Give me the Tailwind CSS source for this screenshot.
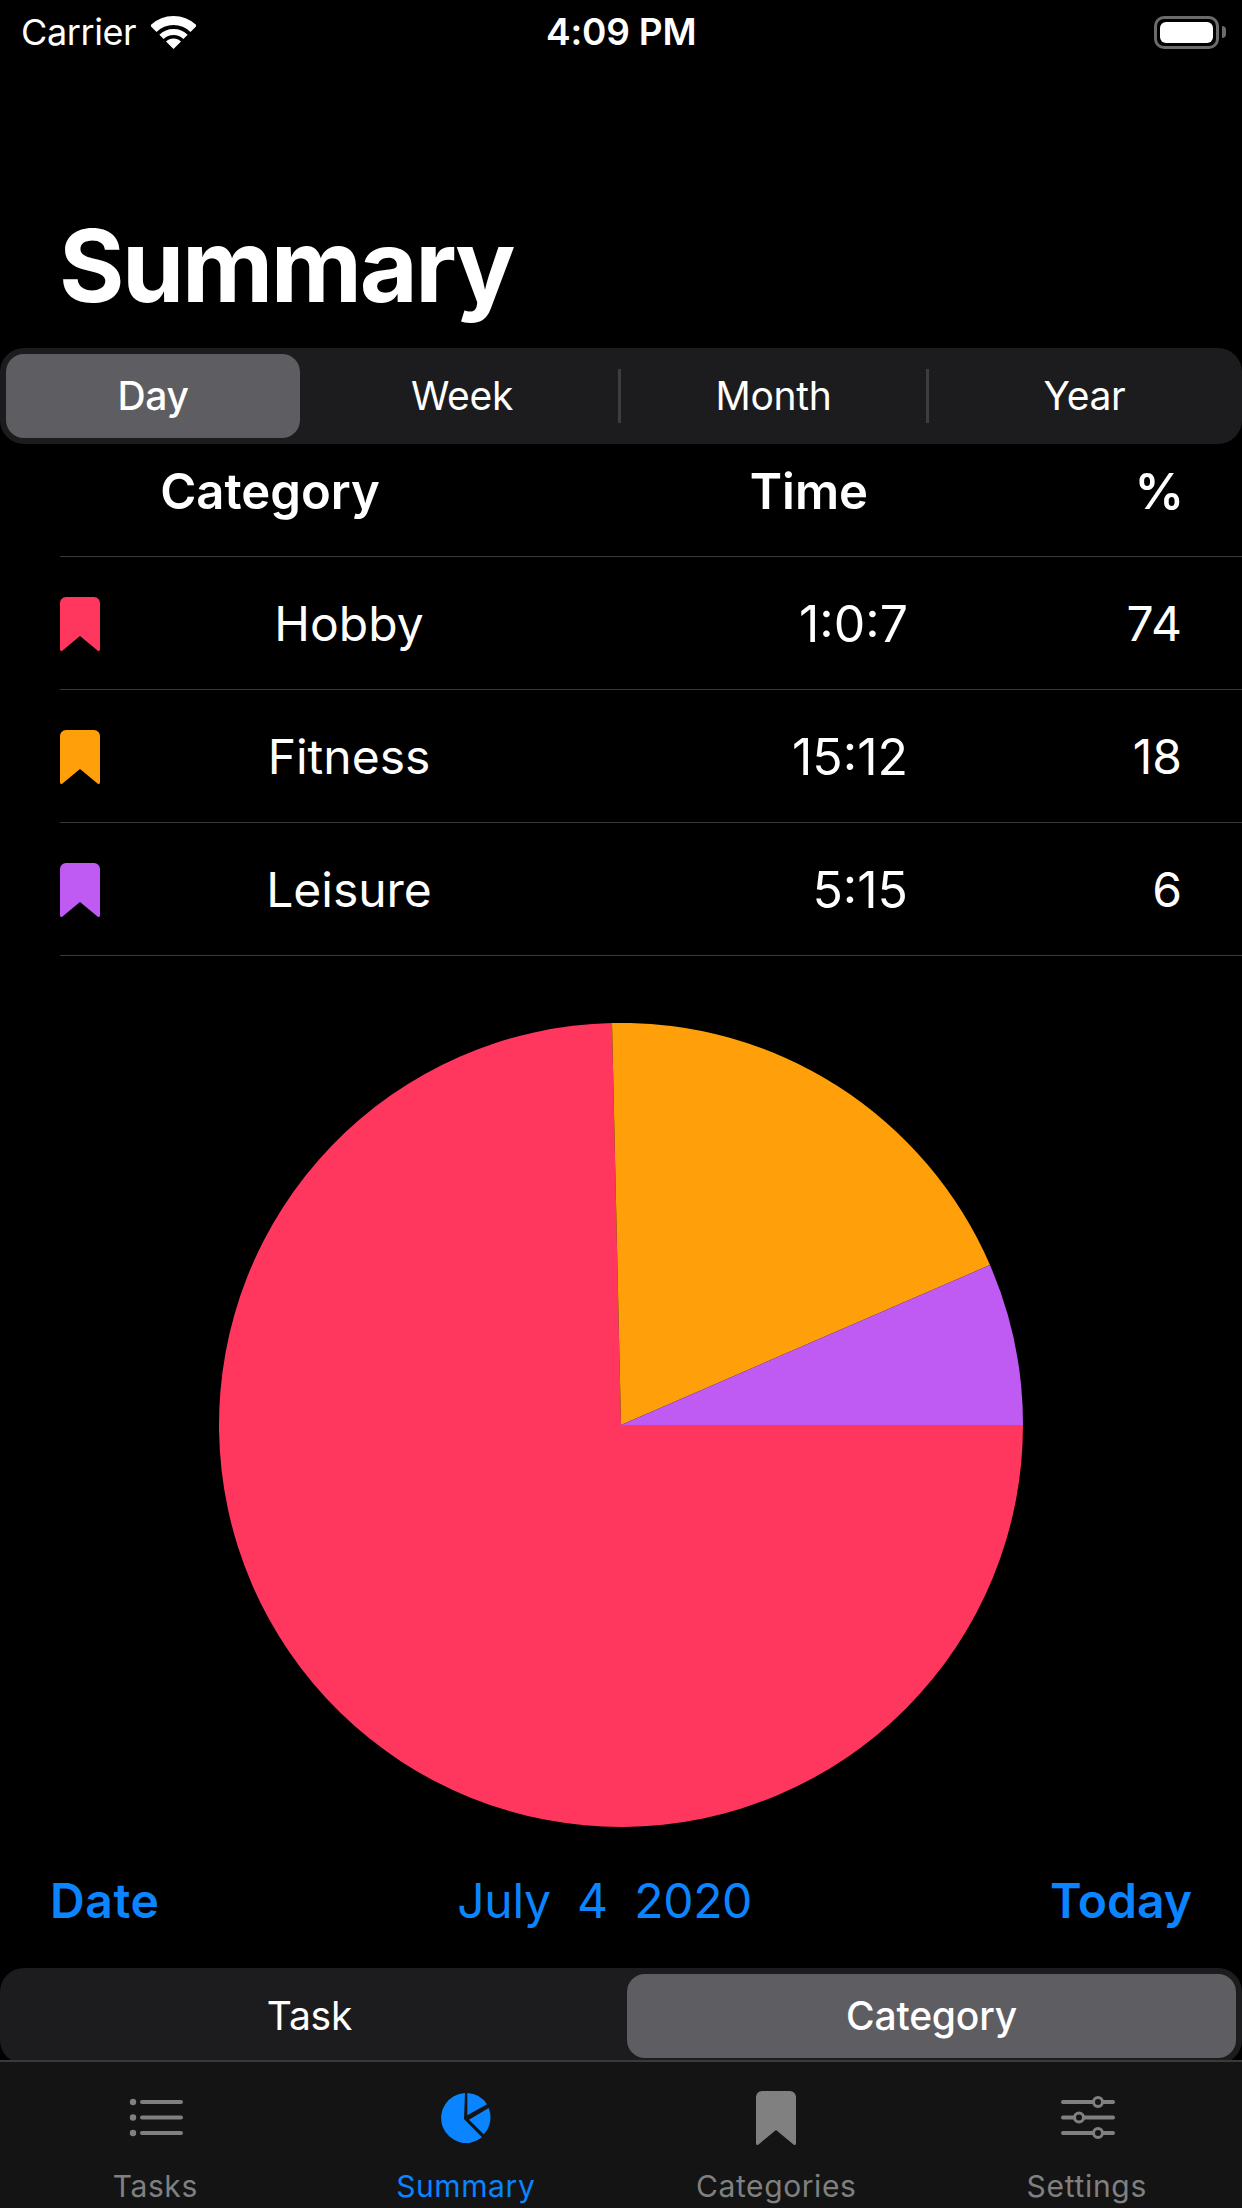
<!DOCTYPE html>
<html lang="en">
  <head>
    <meta charset="UTF-8" />
    <meta name="viewport" content="width=device-width, initial-scale=1.0" />
    <title>Summary</title>
    <script src="https://cdn.jsdelivr.net/npm/@tailwindcss/browser@4"></script>
  </head>
  <body class="bg-black font-['Inter',sans-serif] text-white">
    <div class="w-[1242px] h-[2208px] flex flex-col overflow-hidden bg-black">
      <!-- status bar -->
      <div class="h-[64px] shrink-0 relative flex items-center pl-[21px] pr-[16px]">
        <span class="text-[36px] leading-[64px] tracking-[-0.4px]">Carrier</span>
        <svg class="ml-[15px] w-[45px] h-[33px]" viewBox="0 0 45 33" fill="none" stroke="white">
          <path d="M2.35 12.85A28.5 28.5 0 0 1 42.65 12.85" stroke-width="9" />
          <path d="M10.48 20.98A17 17 0 0 1 34.52 20.98" stroke-width="6" />
          <path d="M22.5 33L15 25.5A10.6 10.6 0 0 1 30 25.5Z" fill="white" stroke="none" />
        </svg>
        <span class="absolute left-[546px] top-0 text-[37px] leading-[64px] font-semibold tracking-[-0.2px]">4:09 PM</span>
        <div class="ml-auto flex items-center">
          <div class="w-[65px] h-[33px] rounded-[10px] border-[3px] border-[#6b6b6b] p-[3px]">
            <div class="w-full h-full rounded-[6px] bg-white"></div>
          </div>
          <div class="w-[4px] h-[12px] ml-[3px] rounded-r-full bg-[#6b6b6b]"></div>
        </div>
      </div>

      <h1 class="h-[284px] shrink-0 pl-[59px] pt-[140px] text-[100px] leading-[124px] font-bold tracking-[-2.4px]">Summary</h1>

      <!-- range picker -->
      <div class="h-[96px] shrink-0 rounded-[24px] bg-[#1c1c1e] p-[6px] flex items-center text-[39px] tracking-[-0.3px]">
        <div class="w-[294px] h-[84px] rounded-[18px] bg-[#5e5e62] flex items-center justify-center font-medium">Day</div>
        <div class="w-[318px] pl-[6px] flex items-center justify-center">Week</div>
        <div class="w-[3px] h-[54px] bg-[#3d3d40]"></div>
        <div class="w-[305px] flex items-center justify-center">Month</div>
        <div class="w-[3px] h-[54px] bg-[#3d3d40]"></div>
        <div class="flex-1 pl-[4px] flex items-center justify-center">Year</div>
      </div>

      <!-- table -->
      <div class="ml-[60px] shrink-0">
        <div class="h-[113px] border-b-[1.5px] border-[#3a3a3c] grid grid-cols-[40px_340px_428px_1fr] pr-[58px] items-center text-[49px] font-semibold pb-[17px]">
          <span></span>
          <span class="text-center">Category</span>
          <span class="text-right">Time</span>
          <span class="text-right">%</span>
        </div>
        <div class="h-[133px] pt-[2px] border-b-[1.5px] border-[#3a3a3c] grid grid-cols-[40px_498px_310px_1fr] pr-[60px] items-center text-[48px]">
          <svg class="w-[40px] h-[54px]" viewBox="0 0 40 54" fill="#ff375f"><path d="M0 6a6 6 0 0 1 6-6h28a6 6 0 0 1 6 6v46q0 3-2.5 1.5L20 39 2.5 53.5Q0 55 0 52Z" /></svg>
          <span class="text-center">Hobby</span>
          <span class="text-right text-[50px]">1:0:7</span>
          <span class="text-right">74</span>
        </div>
        <div class="h-[133px] pt-[2px] border-b-[1.5px] border-[#3a3a3c] grid grid-cols-[40px_498px_310px_1fr] pr-[60px] items-center text-[48px]">
          <svg class="w-[40px] h-[54px]" viewBox="0 0 40 54" fill="#ff9f0a"><path d="M0 6a6 6 0 0 1 6-6h28a6 6 0 0 1 6 6v46q0 3-2.5 1.5L20 39 2.5 53.5Q0 55 0 52Z" /></svg>
          <span class="text-center">Fitness</span>
          <span class="text-right text-[50px]">15:12</span>
          <span class="text-right">18</span>
        </div>
        <div class="h-[133px] pt-[2px] border-b-[1.5px] border-[#3a3a3c] grid grid-cols-[40px_498px_310px_1fr] pr-[60px] items-center text-[48px]">
          <svg class="w-[40px] h-[54px]" viewBox="0 0 40 54" fill="#bf5af2"><path d="M0 6a6 6 0 0 1 6-6h28a6 6 0 0 1 6 6v46q0 3-2.5 1.5L20 39 2.5 53.5Q0 55 0 52Z" /></svg>
          <span class="text-center">Leisure</span>
          <span class="text-right text-[50px]">5:15</span>
          <span class="text-right">6</span>
        </div>
      </div>

      <!-- pie -->
      <div class="shrink-0 pt-[67px] flex justify-center">
        <svg class="w-[804px] h-[804px]" viewBox="0 0 804 804">
          <path d="M402 402L804 402A402 402 0 1 1 393 0Z" fill="#ff375f" />
          <path d="M402 402L393 0A402 402 0 0 1 771 242Z" fill="#ff9f0a" />
          <path d="M402 402L771 242A402 402 0 0 1 804 402Z" fill="#bf5af2" />
        </svg>
      </div>

      <!-- date row -->
      <div class="h-[141px] shrink-0 flex items-center justify-between px-[50px] pt-[6px] text-[48px] text-[#0a84ff]">
        <span class="font-semibold tracking-[0.6px]">Date</span>
        <span class="whitespace-pre tracking-[-0.3px]">July  4  2020</span>
        <span class="font-semibold">Today</span>
      </div>

      <!-- group picker -->
      <div class="h-[96px] -mb-[4px] shrink-0 rounded-[24px] bg-[#1c1c1e] p-[6px] flex items-start text-[39px] tracking-[-0.2px]">
        <div class="w-[621px] h-[84px] pr-[14px] flex items-center justify-center">Task</div>
        <div class="flex-1 h-[84px] rounded-[18px] bg-[#5e5e62] flex items-center justify-center font-medium">Category</div>
      </div>

      <!-- tab bar -->
      <div class="relative flex-1 border-t-[2px] border-[#3a3a3c] bg-[#141414] grid grid-cols-4 text-[30px] text-[#808080]">
        <div class="flex flex-col items-center">
          <svg class="mt-[29px] w-[60px] h-[54px]" viewBox="0 0 60 54" fill="#808080" stroke="none">
            <circle cx="8" cy="11" r="3.2" /><circle cx="8" cy="26.5" r="3.2" /><circle cx="8" cy="42" r="3.2" />
            <path d="M17 11H56M17 26.5H56M17 42H56" stroke="#808080" stroke-width="4" stroke-linecap="round" />
          </svg>
          <span class="mt-[22px] leading-[38px] tracking-[0.6px]">Tasks</span>
        </div>
        <div class="flex flex-col items-center text-[#0a84ff]">
          <svg class="mt-[31px] w-[50px] h-[50px]" viewBox="0 0 50 50" fill="#0a84ff">
            <path d="M24 0A25 25 0 1 0 41 44.3L23 26Z" />
            <path d="M26.3 0A25 25 0 0 1 46 11.3L26.3 22.3Z" />
            <path d="M47.7 15A25 25 0 0 1 42.7 41.3L28 26.7Z" />
          </svg>
          <span class="mt-[24px] leading-[38px] tracking-[0.6px]">Summary</span>
        </div>
        <div class="flex flex-col items-center">
          <svg class="mt-[29px] w-[40px] h-[54px]" viewBox="0 0 40 54" fill="#808080"><path d="M0 6a6 6 0 0 1 6-6h28a6 6 0 0 1 6 6v46q0 3-2.5 1.5L20 39 2.5 53.5Q0 55 0 52Z" /></svg>
          <span class="mt-[22px] leading-[38px] tracking-[0.6px]">Categories</span>
        </div>
        <div class="flex flex-col items-center">
          <svg class="mt-[29px] w-[60px] h-[54px]" viewBox="0 0 60 54" fill="#141414" stroke="#808080">
            <path d="M6 11H56M6 26.5H56M6 42H56" stroke-width="4" stroke-linecap="round" fill="none" />
            <circle cx="41" cy="11" r="4.5" stroke-width="3" /><circle cx="22" cy="26.5" r="4.5" stroke-width="3" /><circle cx="41" cy="42" r="4.5" stroke-width="3" />
          </svg>
          <span class="mt-[22px] leading-[38px] tracking-[0.7px]">Settings</span>
        </div>
      </div>
    </div>
  </body>
</html>
